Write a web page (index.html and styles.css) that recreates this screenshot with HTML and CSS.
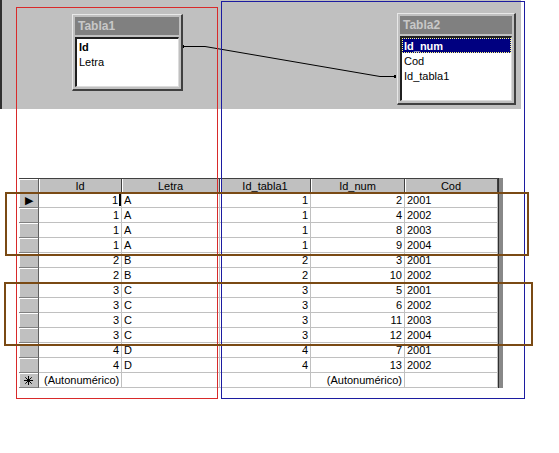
FILE: index.html
```html
<!DOCTYPE html>
<html lang="es">
<head>
    <meta charset="UTF-8">
    <title>Relaciones</title>
    <link rel="stylesheet" href="styles.css">
</head>
<body>
    <div class="pane">
        <svg class="link" width="521" height="109" viewBox="0 0 521 109">
            <path d="M183 46.5 H205 L380 76.5 H396" fill="none" stroke="#000" stroke-width="1"/>
            <rect x="182" y="45" width="2" height="3" fill="#000"/>
            <rect x="394" y="75" width="2" height="3" fill="#000"/>
        </svg>

        <div class="fieldlist tabla1">
            <div class="fieldlist-title">Tabla1</div>
            <div class="fieldlist-body">
                <div class="field key">Id</div>
                <div class="field">Letra</div>
            </div>
        </div>

        <div class="fieldlist tabla2">
            <div class="fieldlist-title">Tabla2</div>
            <div class="fieldlist-body">
                <div class="field key selected">Id_num</div>
                <div class="field">Cod</div>
                <div class="field">Id_tabla1</div>
            </div>
        </div>
    </div>

    <div class="datasheet">
        <div class="grid">
            <div class="row head">
                <div class="sel"></div>
                <div class="cell">Id</div>
                <div class="cell">Letra</div>
                <div class="cell">Id_tabla1</div>
                <div class="cell">Id_num</div>
                <div class="cell">Cod</div>
            </div>
            <div class="row">
                <div class="sel current">&#9654;</div>
                <div class="cell num"><span class="caret">1</span></div>
                <div class="cell">A</div>
                <div class="cell num">1</div>
                <div class="cell num">2</div>
                <div class="cell">2001</div>
            </div>
            <div class="row">
                <div class="sel"></div>
                <div class="cell num">1</div>
                <div class="cell">A</div>
                <div class="cell num">1</div>
                <div class="cell num">4</div>
                <div class="cell">2002</div>
            </div>
            <div class="row">
                <div class="sel"></div>
                <div class="cell num">1</div>
                <div class="cell">A</div>
                <div class="cell num">1</div>
                <div class="cell num">8</div>
                <div class="cell">2003</div>
            </div>
            <div class="row">
                <div class="sel"></div>
                <div class="cell num">1</div>
                <div class="cell">A</div>
                <div class="cell num">1</div>
                <div class="cell num">9</div>
                <div class="cell">2004</div>
            </div>
            <div class="row">
                <div class="sel"></div>
                <div class="cell num">2</div>
                <div class="cell">B</div>
                <div class="cell num">2</div>
                <div class="cell num">3</div>
                <div class="cell">2001</div>
            </div>
            <div class="row">
                <div class="sel"></div>
                <div class="cell num">2</div>
                <div class="cell">B</div>
                <div class="cell num">2</div>
                <div class="cell num">10</div>
                <div class="cell">2002</div>
            </div>
            <div class="row">
                <div class="sel"></div>
                <div class="cell num">3</div>
                <div class="cell">C</div>
                <div class="cell num">3</div>
                <div class="cell num">5</div>
                <div class="cell">2001</div>
            </div>
            <div class="row">
                <div class="sel"></div>
                <div class="cell num">3</div>
                <div class="cell">C</div>
                <div class="cell num">3</div>
                <div class="cell num">6</div>
                <div class="cell">2002</div>
            </div>
            <div class="row">
                <div class="sel"></div>
                <div class="cell num">3</div>
                <div class="cell">C</div>
                <div class="cell num">3</div>
                <div class="cell num">11</div>
                <div class="cell">2003</div>
            </div>
            <div class="row">
                <div class="sel"></div>
                <div class="cell num">3</div>
                <div class="cell">C</div>
                <div class="cell num">3</div>
                <div class="cell num">12</div>
                <div class="cell">2004</div>
            </div>
            <div class="row">
                <div class="sel"></div>
                <div class="cell num">4</div>
                <div class="cell">D</div>
                <div class="cell num">4</div>
                <div class="cell num">7</div>
                <div class="cell">2001</div>
            </div>
            <div class="row">
                <div class="sel"></div>
                <div class="cell num">4</div>
                <div class="cell">D</div>
                <div class="cell num">4</div>
                <div class="cell num">13</div>
                <div class="cell">2002</div>
            </div>
            <div class="row">
                <div class="sel newrow">
                    <svg width="9" height="9" viewBox="0 0 9 9">
                        <path d="M4.5 0 V9 M0 4.5 H9 M1.3 1.3 L7.7 7.7 M7.7 1.3 L1.3 7.7" stroke="#000" stroke-width="1"/>
                    </svg>
                </div>
                <div class="cell auto">(Autonumérico)</div>
                <div class="cell"></div>
                <div class="cell"></div>
                <div class="cell num">(Autonumérico)</div>
                <div class="cell"></div>
            </div>
        </div>
        <div class="strip"></div>
    </div>

    <!-- marks drawn over the screenshot -->
    <div class="mark red"></div>
    <div class="mark blue"></div>
    <div class="mark brown group1"></div>
    <div class="mark brown group2"></div>
</body>
</html>
```

FILE: styles.css
```css
body {
    margin: 0;
    width: 559px;
    height: 453px;
    position: relative;
    overflow: hidden;
    background: #fff;
    font-family: 'Liberation Sans', Arial, sans-serif;
    font-size: 11px;
    color: #000;
}

/* relationship pane */
.pane {
    position: relative;
    width: 521px;
    height: 109px;
    background: #c0c0c0;
    border-left: 2px solid #303030;
    box-sizing: border-box;
}

.link {
    position: absolute;
    left: -2px;
    top: 0;
}

.fieldlist {
    position: absolute;
    box-sizing: border-box;
    display: flex;
    flex-direction: column;
    gap: 2px;
    padding: 2px;
    background: #c0c0c0;
    border-top: 1px solid #e8e8e8;
    border-left: 1px solid #e8e8e8;
    border-right: 2px solid #404040;
    border-bottom: 2px solid #404040;
}

.tabla1 {
    left: 70px;
    top: 14px;
    width: 111px;
    height: 77px;
}

.tabla2 {
    left: 395px;
    top: 13px;
    width: 119px;
    height: 92px;
}

.fieldlist-title {
    height: 18px;
    line-height: 18px;
    padding-left: 3px;
    background: #808080;
    color: #c8c8c8;
    font-weight: bold;
    font-size: 12px;
}

.fieldlist-body {
    flex: 1;
    background: #fff;
    border-top: 2px solid #202020;
    border-left: 2px solid #202020;
    border-right: 1px solid #dcdcdc;
    border-bottom: 1px solid #dcdcdc;
}

.field {
    height: 15px;
    line-height: 16px;
    padding-left: 2px;
    white-space: nowrap;
}

.field.key {
    font-weight: bold;
}

.field.selected {
    background: #000080;
    color: #fff;
    outline: 1px dotted #ffff80;
    outline-offset: -1px;
}

/* datasheet */
.datasheet {
    display: flex;
    margin: 69px 0 0 19px;
    width: 484px;
}

.grid {
    border-top: 1px solid #404040;
}

.row {
    display: grid;
    grid-template-columns: 20px 83px 98px 91px 94px 93px;
    height: 15px;
}

.row.head {
    height: 14px;
}

.cell,
.sel {
    box-sizing: border-box;
    line-height: 14px;
    white-space: nowrap;
    overflow: hidden;
}

.cell {
    padding: 0 2px;
    border-right: 1px solid #c0c0c0;
    border-bottom: 1px solid #c0c0c0;
}

.cell.num {
    text-align: right;
}

.cell.auto {
    padding-left: 5px;
}

.head .cell {
    background: #c0c0c0;
    text-align: center;
    border-right: 1px solid #404040;
    border-bottom: none;
    box-shadow: inset 1px 0 #fff;
}

.sel {
    background: #c0c0c0;
    border-right: 1px solid #606060;
    border-bottom: 1px solid #808080;
    box-shadow: inset 1px 1px #fff;
    text-align: center;
    font-size: 10px;
}

.head .sel {
    border-bottom: none;
}

.sel.current {
    font-size: 11px;
}

.sel.newrow {
    display: flex;
    align-items: center;
    justify-content: center;
}

.caret {
    border-right: 2px solid #000;
    padding-right: 1px;
    margin-right: -2px;
}

.strip {
    width: 5px;
    background: #888;
    border-left: 1px solid #303030;
}

/* annotation boxes */
.mark {
    position: absolute;
    box-sizing: border-box;
    pointer-events: none;
}

.red {
    left: 16px;
    top: 7px;
    width: 202px;
    height: 392px;
    border: 1px solid #d82a2a;
}

.blue {
    left: 221px;
    top: 1px;
    width: 304px;
    height: 398px;
    border: 1px solid #1c1ca0;
}

.brown {
    border: 2px solid #7a4a14;
}

.group1 {
    left: 5px;
    top: 192px;
    width: 524px;
    height: 64px;
}

.group2 {
    left: 4px;
    top: 282px;
    width: 529px;
    height: 64px;
}
```
